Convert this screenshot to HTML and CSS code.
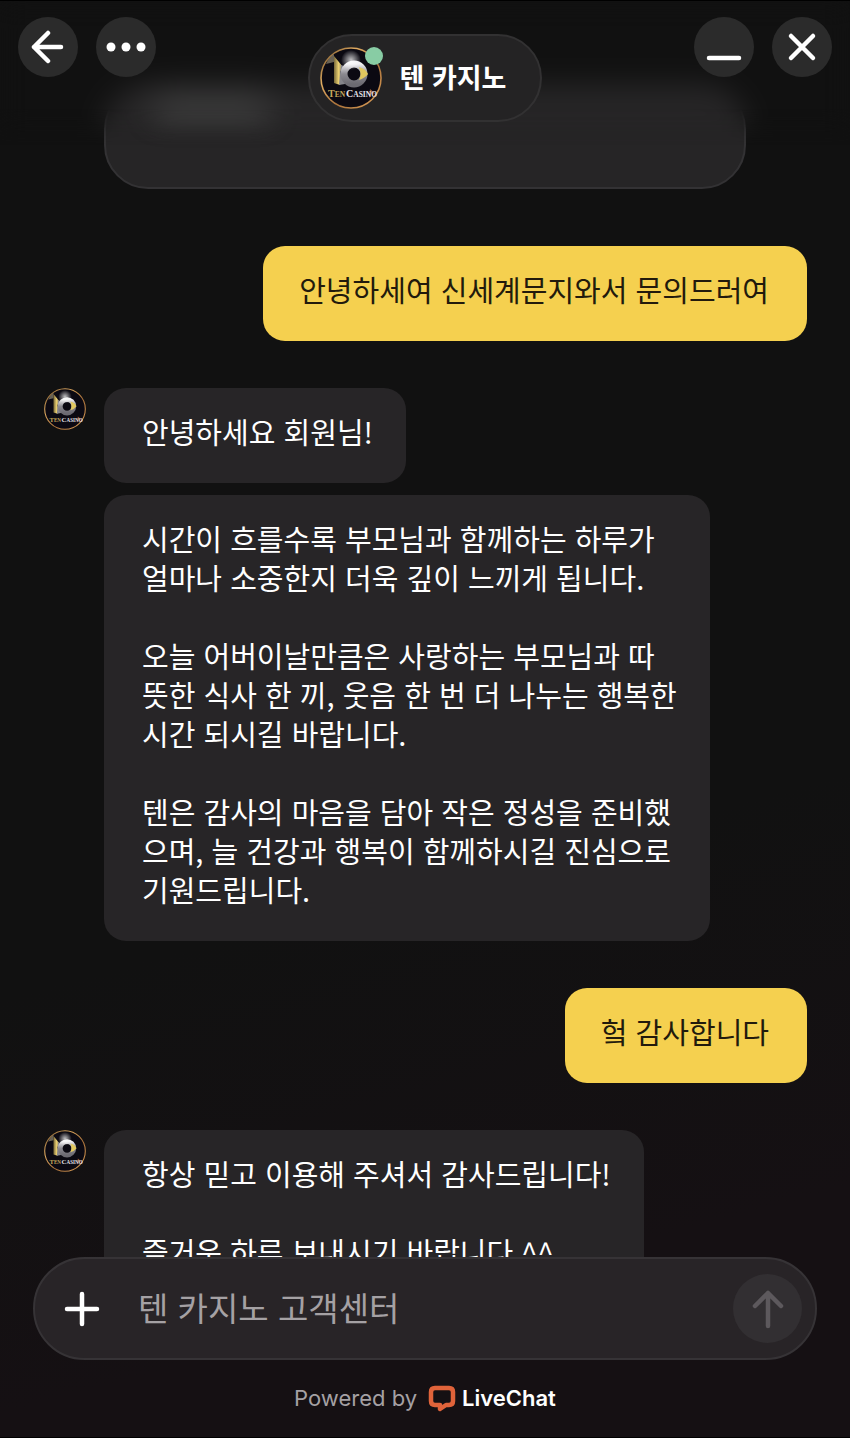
FILE: index.html
```html
<!DOCTYPE html>
<html lang="ko">
<head>
    <meta charset="UTF-8">
    <meta name="viewport" content="width=device-width, initial-scale=1.0">
    <title>텐 카지노</title>
    <link rel="stylesheet" href="styles.css">
</head>
<body>

    <div class="chat">

        <header class="topbar">
            <div class="group">
                <button class="round" type="button" aria-label="뒤로">
                    <svg width="34" height="34" viewBox="0 0 34 34"><path d="M30 17 H3 M17 3 L3 17 L17 31"/></svg>
                </button>
                <button class="round" type="button" aria-label="메뉴">
                    <svg class="solid" width="40" height="10" viewBox="0 0 40 10"><circle cx="5" cy="5" r="4.5"/><circle cx="20" cy="5" r="4.5"/><circle cx="35" cy="5" r="4.5"/></svg>
                </button>
            </div>

            <div class="agent">
                <span class="agent-photo">
                    <svg class="logo" viewBox="0 0 62 62">
                        <defs>
                            <linearGradient id="gold" x1="0" y1="0" x2="1" y2="1">
                                <stop offset="0" stop-color="#6b4a22"/>
                                <stop offset="0.3" stop-color="#e0ab62"/>
                                <stop offset="0.6" stop-color="#a9713a"/>
                                <stop offset="1" stop-color="#e2a45c"/>
                            </linearGradient>
                            <linearGradient id="one" x1="0" y1="0" x2="1" y2="0">
                                <stop offset="0" stop-color="#77683a"/>
                                <stop offset="0.5" stop-color="#e8cd70"/>
                                <stop offset="1" stop-color="#8c8878"/>
                            </linearGradient>
                            <linearGradient id="silver" x1="0" y1="0" x2="0" y2="1">
                                <stop offset="0" stop-color="#f0eff2"/>
                                <stop offset="0.5" stop-color="#8b8990"/>
                                <stop offset="1" stop-color="#6c6a72"/>
                            </linearGradient>
                            <radialGradient id="glow">
                                <stop offset="0" stop-color="#ffffff" stop-opacity="0.75"/>
                                <stop offset="1" stop-color="#ffffff" stop-opacity="0"/>
                            </radialGradient>
                        </defs>
                        <g id="logo">
                            <circle cx="31" cy="31" r="30" fill="#0b0912" stroke="url(#gold)" stroke-width="1.6"/>
                            <path d="M6 17 Q9 10 14 7 L14 15 Z" fill="#a79c80" opacity="0.6"/>
                            <path d="M14 9 L23 20 L20 25 Q22 32 20 38 L14 36 Z" fill="url(#one)"/>
                            <path d="M21 18 L27 20 L25 37 L19 38 Z" fill="#85848b"/>
                            <circle cx="34" cy="27" r="10" fill="#0b0912" stroke="url(#silver)" stroke-width="7"/>
                            <circle cx="31" cy="13" r="10" fill="url(#glow)"/>
                            <path d="M39 20 Q46 22 48 27 Q45 31 39 33 Q42 27 39 20 Z" fill="#e2c85e"/>
                            <path d="M50 42 L56 47 L52 46 L49 51 Z" fill="#9a5a35"/>
                            <text x="8" y="50" class="logo-text" fill="#c4a85c">T<tspan font-size="7.5">EN</tspan></text>
                            <text x="26" y="50" class="logo-text" fill="#e6e4ea">C<tspan font-size="7.5">ASINO</tspan></text>
                        </g>
                    </svg>
                    <span class="online"></span>
                </span>
                <h1>텐 카지노</h1>
            </div>

            <div class="group">
                <button class="round" type="button" aria-label="최소화">
                    <svg width="40" height="40" viewBox="0 0 40 40"><path d="M5 31 H35"/></svg>
                </button>
                <button class="round" type="button" aria-label="닫기">
                    <svg width="30" height="30" viewBox="0 0 30 30"><path d="M4 4 L26 26 M26 4 L4 26"/></svg>
                </button>
            </div>
        </header>

        <main class="feed">
            <div class="card"><span class="card-line"></span></div>

            <div class="row mine">
                <p class="bubble">안녕하세여 신세계문지와서 문의드러여</p>
            </div>

            <div class="row">
                <svg class="avatar" viewBox="0 0 62 62"><use href="#logo"/></svg>
                <div class="stack">
                    <p class="bubble">안녕하세요 회원님!</p>
                    <p class="bubble">시간이 흐를수록 부모님과 함께하는 하루가<br>얼마나 소중한지 더욱 깊이 느끼게 됩니다.<br><br>오늘 어버이날만큼은 사랑하는 부모님과 따<br>뜻한 식사 한 끼, 웃음 한 번 더 나누는 행복한<br>시간 되시길 바랍니다.<br><br>텐은 감사의 마음을 담아 작은 정성을 준비했<br>으며, 늘 건강과 행복이 함께하시길 진심으로<br>기원드립니다.</p>
                </div>
            </div>

            <div class="row mine">
                <p class="bubble">헠 감사합니다</p>
            </div>

            <div class="row">
                <svg class="avatar" viewBox="0 0 62 62"><use href="#logo"/></svg>
                <div class="stack">
                    <p class="bubble">항상 믿고 이용해 주셔서 감사드립니다!<br><br>즐거운 하루 보내시기 바랍니다 ^^</p>
                </div>
            </div>
        </main>

        <footer class="bottom">
            <form class="composer">
                <button class="plus" type="button" aria-label="첨부">
                    <svg width="36" height="36" viewBox="0 0 36 36"><path d="M18 3 V33 M3 18 H33"/></svg>
                </button>
                <input type="text" aria-label="메시지" placeholder="텐 카지노 고객센터">
                <button class="send" type="submit" aria-label="보내기">
                    <svg width="40" height="40" viewBox="0 0 40 40"><path d="M20 37 V4 M7 17 L20 4 L33 17"/></svg>
                </button>
            </form>
            <p class="powered">
                Powered by
                <a href="#">
                    <svg width="28" height="28" viewBox="0 0 28 28"><path d="M7 4 H21 Q25 4 25 8 V17 Q25 21 21 21 H18 L12 25 V21 H7 Q3 21 3 17 V8 Q3 4 7 4 Z"/></svg>
                    LiveChat
                </a>
            </p>
        </footer>

    </div>

</body>
</html>
```

FILE: styles.css
```css
* {
    box-sizing: border-box;
}

body {
    margin: 0;
    font-family: "Noto Sans CJK KR", sans-serif;
    color: #fff;
    background-color: #111;
}

h1,
p {
    margin: 0;
}

button {
    display: flex;
    justify-content: center;
    align-items: center;
    flex-shrink: 0;
    padding: 0;
    border: none;
    color: #fff;
    background: none;
    cursor: pointer;
}

svg {
    fill: none;
    stroke: currentColor;
    stroke-width: 4.5;
    stroke-linecap: round;
    stroke-linejoin: round;
}

.solid {
    fill: currentColor;
    stroke: none;
}

.logo,
.avatar {
    stroke: none;
}

.logo-text {
    font-family: "Liberation Serif", serif;
    font-size: 10px;
    font-weight: bold;
}

.chat {
    position: relative;
    display: flex;
    flex-direction: column;
    height: 100vh;
    overflow: hidden;
    border-top: 1px solid #000;
    border-bottom: 1px solid #000;
    background: linear-gradient(165deg, #111 0%, #111 60%, #151013 85%);
}

/* header floats over the messages */
.topbar {
    position: absolute;
    z-index: 1;
    top: 0;
    left: 0;
    right: 0;
    display: flex;
    justify-content: space-between;
    align-items: flex-start;
    padding: 16px 18px 0;
    height: 144px;
}

.topbar::before {
    content: "";
    position: absolute;
    z-index: -1;
    inset: 0;
    backdrop-filter: blur(14px);
    -webkit-mask-image: linear-gradient(#000 75%, transparent);
    mask-image: linear-gradient(#000 75%, transparent);
}

.group {
    display: flex;
    gap: 18px;
}

.round {
    width: 60px;
    height: 60px;
    border-radius: 50%;
    background-color: #2b2b2b;
}

.agent {
    display: flex;
    align-items: center;
    gap: 18px;
    margin-top: 17px;
    padding: 11px 34px 11px 10px;
    border: 2px solid #323132;
    border-radius: 44px;
    background-color: #242324;
}

.agent-photo {
    position: relative;
    display: flex;
}

.logo {
    width: 62px;
    height: 62px;
}

.online {
    position: absolute;
    top: 0;
    right: -1px;
    width: 18px;
    height: 18px;
    border-radius: 50%;
    background-color: #88cca4;
}

.agent h1 {
    padding-bottom: 2px;
    font-size: 27px;
    font-weight: bold;
    line-height: 40px;
}

.feed {
    flex: 1;
    min-height: 0;
    display: flex;
    flex-direction: column;
    gap: 47px;
    padding: 84px 43px 0 44px;
    overflow: hidden;
}

.card {
    flex-shrink: 0;
    height: 104px;
    margin: 0 61px 10px 60px;
    padding: 10px 46px;
    border: 2px solid #333234;
    border-radius: 44px;
    background-color: #262526;
}

.card-line {
    display: block;
    width: 120px;
    height: 22px;
    border-radius: 10px;
    background-color: #484848;
    filter: blur(12px);
}

.row {
    display: flex;
    flex-shrink: 0;
    align-items: flex-start;
    gap: 18px;
}

.mine {
    justify-content: flex-end;
}

.avatar {
    flex-shrink: 0;
    width: 42px;
    height: 42px;
}

.stack {
    display: flex;
    flex-direction: column;
    align-items: flex-start;
    gap: 12px;
}

.bubble {
    padding: 24px 33px 32px 38px;
    border-radius: 22px;
    font-size: 29px;
    line-height: 39px;
    background-color: #272527;
}

.mine .bubble {
    padding: 24px 38px 32px 36px;
    color: #221a0c;
    background-color: #f5d04f;
}

.bottom {
    flex-shrink: 0;
    padding: 0 33px 21px;
}

.composer {
    display: flex;
    align-items: center;
    padding: 15px 13px 15px 29px;
    border: 2px solid #363336;
    border-radius: 52px;
    background-color: #282427;
}

.plus {
    width: 36px;
    height: 36px;
}

.composer input {
    flex: 1;
    min-width: 0;
    margin: 0 20px 0 38px;
    padding: 0 0 4px;
    border: none;
    outline: none;
    font-family: inherit;
    font-size: 33px;
    line-height: 48px;
    color: #fff;
    background: none;
}

.composer input::placeholder {
    color: #a5a1a4;
    opacity: 1;
}

.send {
    width: 69px;
    height: 69px;
    border-radius: 50%;
    color: #5d595d;
    background-color: #322f32;
}

.powered {
    display: flex;
    justify-content: center;
    align-items: center;
    gap: 11px;
    margin-top: 20px;
    font-family: Inter, sans-serif;
    font-size: 22px;
    line-height: 36px;
    color: #a5a1a4;
}

.powered a {
    display: flex;
    align-items: center;
    gap: 6px;
    color: #fff;
    font-weight: 600;
    text-decoration: none;
}

.powered svg {
    stroke: #e0633a;
}
```
